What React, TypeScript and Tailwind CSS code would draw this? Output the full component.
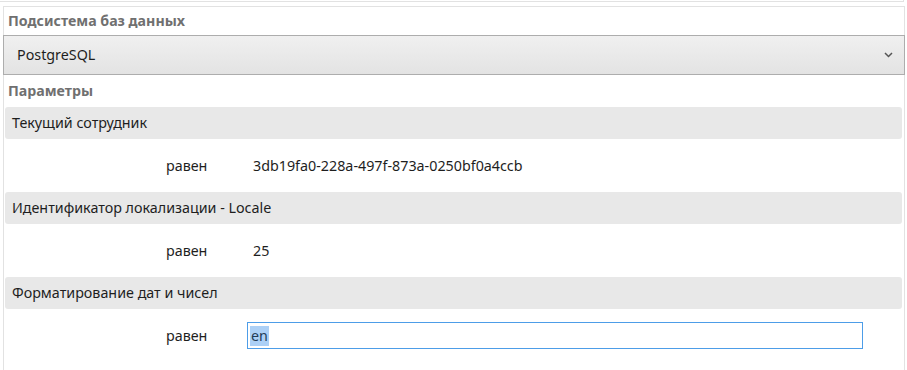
const font = { fontFamily: '"Noto Sans", "Open Sans", sans-serif' };

type Param = { title: string; value: string; editable?: boolean };

const params: Param[] = [
  { title: "Текущий сотрудник", value: "3db19fa0-228a-497f-873a-0250bf0a4ccb" },
  { title: "Идентификатор локализации - Locale", value: "25" },
  { title: "Форматирование дат и чисел", value: "en", editable: true },
];

function ParamBlock({ p }: { p: Param }) {
  return (
    <div className="flex flex-col">
      {/* header */}
      <div className="ml-[1px] mr-[2px] flex h-[32px] items-center rounded-[3px] bg-[#e8e8e8] pl-[7px] text-[14.3px] text-[#1e1e1e]">
        {p.title}
      </div>
      {/* condition */}
      <div className="flex h-[53px] items-center text-[14.3px] text-[#1e1e1e]">
        <span className="w-[243px] pl-[162px]">равен</span>
        {p.editable ? (
          <div className="flex h-[27px] w-[616px] items-center border border-[#4d9de8] bg-white pl-[2px]">
            <span className="bg-[#acd0f6] px-[1px] leading-[20px] text-[#233c57]">{p.value}</span>
          </div>
        ) : (
          <span className="pl-[6px]">{p.value}</span>
        )}
      </div>
    </div>
  );
}

export default function App() {
  return (
    <div className="flex h-[370px] w-[907px] flex-col bg-white" style={font}>
      <div className="h-[2px] w-[904px] shrink-0 border-b border-r border-[#e2e2e2]" />
      <div className="ml-[3px] mt-[4px] w-[902px] flex-1 border-l border-r border-t border-[#e2e2e2]">
        <div className="flex h-[28px] items-center pl-[4px] text-[14.2px] font-bold text-[#707070]">
          Подсистема баз данных
        </div>
        <div className="-ml-[1px] -mr-[1px] flex h-[40px] items-center justify-between border border-[#adadad] bg-linear-to-b from-[#f0f0f0] to-[#e3e3e3] pl-[13px] pr-[11px] text-[14.3px] text-[#1e1e1e]">
          <span>PostgreSQL</span>
          <svg width="9" height="6" viewBox="0 0 9 6" fill="none">
            <polyline points="1,1 4.5,4.5 8,1" stroke="#555" strokeWidth="1.5" />
          </svg>
        </div>
        <div className="flex h-[32px] items-center pl-[4px] text-[14.2px] font-bold text-[#707070]">
          Параметры
        </div>
        {params.map((p) => (
          <ParamBlock key={p.title} p={p} />
        ))}
      </div>
    </div>
  );
}
